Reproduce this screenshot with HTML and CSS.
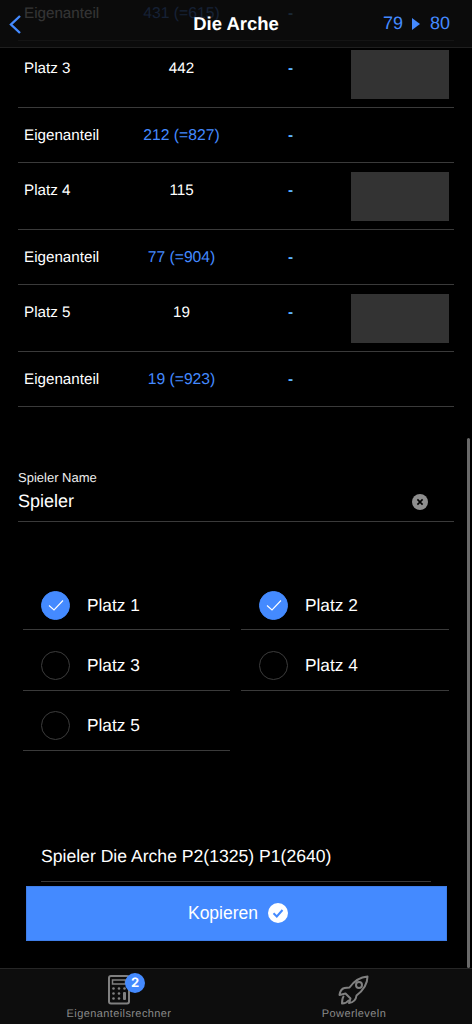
FILE: index.html
```html
<!DOCTYPE html>
<html lang="de">
<head>
<meta charset="utf-8">
<title>Die Arche</title>
<link rel="stylesheet" href="styles.css">
</head>
<body>
<div class="app">
  <header class="topbar">
    <svg class="back" viewBox="0 0 14 20" width="14" height="20"><path d="M12 2 L3 10.5 L12 19" fill="none" stroke="#448aff" stroke-width="2.4"/></svg>
    <h1 class="title">Die Arche</h1>
    <div class="levels"><span>79</span><svg class="tri" viewBox="0 0 8 12" width="8" height="12"><path d="M0 0 L8 6 L0 12 Z" fill="#448aff"/></svg><span>80</span></div>
  </header>
  <main class="content">
    <section class="table">
      <div class="row row-sub"><span class="lead">Eigenanteil</span><span class="cell blue">431 (=615)</span><span class="cell dash">-</span></div>
      <div class="row row-place"><span class="lead">Platz 3</span><span class="cell">442</span><span class="cell dash">-</span><div class="thumb"></div></div>
      <div class="row row-sub"><span class="lead">Eigenanteil</span><span class="cell blue">212 (=827)</span><span class="cell dash">-</span></div>
      <div class="row row-place"><span class="lead">Platz 4</span><span class="cell">115</span><span class="cell dash">-</span><div class="thumb"></div></div>
      <div class="row row-sub"><span class="lead">Eigenanteil</span><span class="cell blue">77 (=904)</span><span class="cell dash">-</span></div>
      <div class="row row-place"><span class="lead">Platz 5</span><span class="cell">19</span><span class="cell dash">-</span><div class="thumb"></div></div>
      <div class="row row-sub"><span class="lead">Eigenanteil</span><span class="cell blue">19 (=923)</span><span class="cell dash">-</span></div>
    </section>
    <section class="name-field">
      <label class="name-label">Spieler Name</label>
      <div class="name-value"><span>Spieler</span>
        <svg class="clear" viewBox="0 0 16 16" width="16" height="16"><circle cx="8" cy="8" r="8" fill="#8e8e8e"/><path d="M5.4 5.4 L10.6 10.6 M10.6 5.4 L5.4 10.6" stroke="#000" stroke-width="1.6"/></svg>
      </div>
    </section>
    <section class="places">
      <div class="place"><span class="radio on"><svg viewBox="0 0 18 18" width="18" height="18"><path d="M2 9.5 L7 14 L16 4.5" fill="none" stroke="#fff" stroke-width="1.1"/></svg></span><span>Platz 1</span></div>
      <div class="place"><span class="radio on"><svg viewBox="0 0 18 18" width="18" height="18"><path d="M2 9.5 L7 14 L16 4.5" fill="none" stroke="#fff" stroke-width="1.1"/></svg></span><span>Platz 2</span></div>
      <div class="place"><span class="radio"></span><span>Platz 3</span></div>
      <div class="place"><span class="radio"></span><span>Platz 4</span></div>
      <div class="place"><span class="radio"></span><span>Platz 5</span></div>
    </section>
    <div class="summary">Spieler Die Arche P2(1325) P1(2640)</div>
    <button class="copy" type="button"><span>Kopieren</span>
      <svg viewBox="0 0 20 20" width="20" height="20"><circle cx="10" cy="10" r="10" fill="#fff"/><path d="M5.5 10.2 L8.8 13.5 L14.5 7" fill="none" stroke="#448aff" stroke-width="2"/></svg>
    </button>
  </main>
  <div class="scrollbar"></div>
  <nav class="tabs">
    <div class="tab tab-calc">
      <span class="tab-icon">
        <svg viewBox="0 0 22 30" width="22" height="30" fill="none" stroke="#808080">
          <rect x="1" y="1" width="20" height="27.5" rx="2" stroke-width="2"/>
          <rect x="4.5" y="5" width="13" height="4" stroke-width="1.5"/>
          <g fill="#808080" stroke="none">
            <circle cx="5.5" cy="13.5" r="1.3"/><circle cx="11" cy="13.5" r="1.3"/><circle cx="16.5" cy="13.5" r="1.3"/>
            <circle cx="5.5" cy="18.5" r="1.3"/><circle cx="11" cy="18.5" r="1.3"/>
            <circle cx="5.5" cy="23.5" r="1.3"/><circle cx="11" cy="23.5" r="1.3"/>
            <rect x="15" y="17" width="3" height="8" rx="1"/>
          </g>
        </svg>
        <span class="badge">2</span>
      </span>
      <span class="tab-label">Eigenanteilsrechner</span>
    </div>
    <div class="tab">
      <span class="tab-icon">
        <svg viewBox="0 0 32 30" width="32" height="30" fill="none" stroke="#808080" stroke-width="2" stroke-linejoin="round" stroke-linecap="round">
          <path d="M29.5 1.5 C22 2 16.5 5.5 11.5 12.5 L6.5 13 C4 13.500 2 16.500 1.500 20 L7.500 18.500 L12.500 23.500 L11 28 C15 27.500 18 25 18.500 20.500 C25 15.500 29.500 10 29.500 1.500 Z"/>
          <circle cx="21" cy="10" r="3"/>
          <path d="M5.500 21.500 C4 23.500 4 26 4 28.500 C7 28.500 9 27.500 10.500 25.500"/>
        </svg>
      </span>
      <span class="tab-label">Powerleveln</span>
    </div>
  </nav>
</div>
</body>
</html>
```
FILE: styles.css
```css
* { box-sizing: border-box; }
html, body { margin: 0; padding: 0; background: #000; }
body { font-family: "Liberation Sans", Arial, sans-serif; color: #fff; text-rendering: geometricPrecision; }
.app { position: relative; width: 472px; height: 1024px; overflow: hidden; display: flex; flex-direction: column; background: #000; }

.topbar { position: absolute; top: 0; left: 0; right: 0; height: 48px; z-index: 2; background: rgba(13,13,13,.84); border-bottom: 1px solid #1f1f1f; display: flex; align-items: center; justify-content: center; }
.back { position: absolute; left: 8px; top: 14px; }
.title { margin: 0; font-size: 18.500px; font-weight: 700; color: #fff; }
.levels { position: absolute; right: 22px; top: 0; height: 47px; display: flex; align-items: center; gap: 9.500px; color: #448aff; font-size: 18px; }

.content { flex: 1; min-height: 0; overflow: hidden; margin-top: -14px; }
.table { margin: 0 18px; }
.row { display: grid; grid-template-columns: repeat(4, 109px); border-bottom: 1px solid #3a3a3a; font-size: 15.200px; }
.row-sub { height: 55px; align-items: center; padding-top: 1px; }
.row-place { height: 67px; padding-top: 19px; align-items: start; position: relative; }
.lead { padding-left: 6px; }
.cell { text-align: center; }
.blue { color: #448aff; font-size: 15.700px; }
.dash { color: #5cb3ff; font-weight: 700; }
.thumb { width: 98px; height: 49px; margin: -10px 0 0 6px; background: #333; }

.name-field { margin: 62px 18px 0; border-bottom: 1px solid #3a3a3a; height: 53px; padding-top: 1px; }
.name-label { display: block; font-size: 13px; line-height: 15px; color: #eee; }
.name-value { display: flex; align-items: center; justify-content: space-between; font-size: 18px; height: 33px; padding-right: 26px; }
.clear { display: block; }

.places { margin: 48px 23px 0; display: grid; grid-template-columns: 207px 208px; column-gap: 11px; }
.place { height: 60.300px; display: flex; align-items: center; gap: 17px; padding-left: 18px; padding-top: 11px; border-bottom: 1px solid #3a3a3a; font-size: 17.300px; }
.radio { width: 29px; height: 29px; border-radius: 50%; border: 1px solid #3c3c3c; display: flex; align-items: center; justify-content: center; }
.radio.on { background: #448aff; border-color: #448aff; }

.summary { margin: 75px 41px 0; height: 56px; padding-top: 7px; display: flex; align-items: center; border-bottom: 1px solid #3a3a3a; font-size: 17.600px; }
.copy { display: flex; align-items: center; justify-content: center; gap: 10px; width: 421px; height: 55px; margin: 4px 0 0 25.500px; padding: 0 0 0 4px; border: 1px solid #3f7ee8; background: #448aff; color: #fff; font-family: inherit; font-size: 17.500px; }
.copy svg { display: block; }

.scrollbar { position: absolute; left: 467px; top: 438px; width: 3px; height: 530px; border-radius: 2px; background: #6a6a6a; z-index: 1; }

.tabs { height: 56px; flex: none; display: grid; grid-template-columns: 1fr 1fr; background: #0d0d0d; border-top: 1px solid #262626; position: relative; z-index: 2; }
.tab { display: flex; flex-direction: column; align-items: center; padding-top: 6px; }
.tab-calc { padding-left: 2px; }
.tab-icon { position: relative; display: block; height: 30px; }
.tab-icon svg { display: block; }
.tab-label { margin-top: 3px; font-size: 11px; line-height: 13px; letter-spacing: .4px; color: #8a8a8a; }
.badge { position: absolute; left: 17px; top: -2px; width: 20px; height: 20px; border-radius: 50%; background: #448aff; color: #fff; font-size: 13px; font-weight: 700; line-height: 20px; text-align: center; font-family: "Inter", sans-serif; }
```
